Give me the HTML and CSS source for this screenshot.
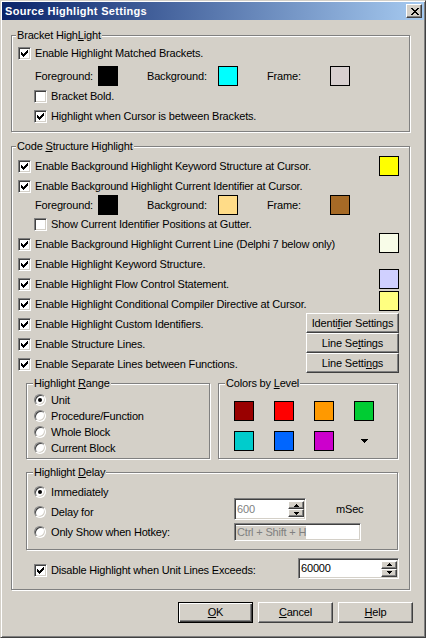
FILE: index.html
```html
<!DOCTYPE html>
<html>
<head>
<meta charset="utf-8">
<title>Source Highlight Settings</title>
<link rel="stylesheet" href="styles.css">
</head>
<body>
<div class="window">
  <div class="titlebar">
    <span class="title">Source Highlight Settings</span>
    <span class="close"><svg width="8" height="7" viewBox="0 0 8 7"><path d="M0 0h2v1h-2zM6 0h2v1h-2zM1 1h2v1h-2zM5 1h2v1h-2zM2 2h4v1h-4zM3 3h2v1h-2zM2 4h4v1h-4zM1 5h2v1h-2zM5 5h2v1h-2zM0 6h2v1h-2zM6 6h2v1h-2z"/></svg></span>
  </div>
  <div class="client">
    <fieldset class="group g1">
      <legend>Bracket High<u>L</u>ight</legend>
      <div class="row"><label class="chk"><span class="cb"><svg width="7" height="7" viewBox="0 0 7 7"><path d="M6 0h1v1h-1zM5 1h2v1h-2zM0 2h1v1h-1zM4 2h3v1h-3zM0 3h2v1h-2zM3 3h3v1h-3zM0 4h5v1h-5zM1 5h3v1h-3zM2 6h1v1h-1z"/></svg></span>Enable Highlight Matched Brackets.</label></div>
      <div class="fg fg1">
        <span class="lbl w63">Foreground:</span><span class="sw c-black"></span>
        <span class="lbl w71">Background:</span><span class="sw c-cyan"></span>
        <span class="lbl w63">Frame:</span><span class="sw c-pale"></span>
      </div>
      <div class="row sub"><label class="chk"><span class="cb"></span>Bracket Bold.</label></div>
      <div class="row sub"><label class="chk"><span class="cb"><svg width="7" height="7" viewBox="0 0 7 7"><path d="M6 0h1v1h-1zM5 1h2v1h-2zM0 2h1v1h-1zM4 2h3v1h-3zM0 3h2v1h-2zM3 3h3v1h-3zM0 4h5v1h-5zM1 5h3v1h-3zM2 6h1v1h-1z"/></svg></span>Highlight when Cursor is between Brackets.</label></div>
    </fieldset>

    <fieldset class="group g2">
      <legend>Code <u>S</u>tructure Highlight</legend>
      <div class="row split"><label class="chk"><span class="cb"><svg width="7" height="7" viewBox="0 0 7 7"><path d="M6 0h1v1h-1zM5 1h2v1h-2zM0 2h1v1h-1zM4 2h3v1h-3zM0 3h2v1h-2zM3 3h3v1h-3zM0 4h5v1h-5zM1 5h3v1h-3zM2 6h1v1h-1z"/></svg></span>Enable Background Highlight Keyword Structure at Cursor.</label><span class="sw c-yellow"></span></div>
      <div class="row"><label class="chk"><span class="cb"><svg width="7" height="7" viewBox="0 0 7 7"><path d="M6 0h1v1h-1zM5 1h2v1h-2zM0 2h1v1h-1zM4 2h3v1h-3zM0 3h2v1h-2zM3 3h3v1h-3zM0 4h5v1h-5zM1 5h3v1h-3zM2 6h1v1h-1z"/></svg></span>Enable Background Highlight Current Identifier at Cursor.</label></div>
      <div class="fg fg2">
        <span class="lbl w63">Foreground:</span><span class="sw c-black"></span>
        <span class="lbl w71">Background:</span><span class="sw c-sand"></span>
        <span class="lbl w63">Frame:</span><span class="sw c-brown"></span>
      </div>
      <div class="row sub short"><label class="chk"><span class="cb"></span>Show Current Identifier Positions at Gutter.</label></div>
      <div class="row split gap1"><label class="chk"><span class="cb"><svg width="7" height="7" viewBox="0 0 7 7"><path d="M6 0h1v1h-1zM5 1h2v1h-2zM0 2h1v1h-1zM4 2h3v1h-3zM0 3h2v1h-2zM3 3h3v1h-3zM0 4h5v1h-5zM1 5h3v1h-3zM2 6h1v1h-1z"/></svg></span>Enable Background Highlight Current Line (Delphi 7 below only)</label><span class="sw c-ivory up1"></span></div>
      <div class="row"><label class="chk"><span class="cb"><svg width="7" height="7" viewBox="0 0 7 7"><path d="M6 0h1v1h-1zM5 1h2v1h-2zM0 2h1v1h-1zM4 2h3v1h-3zM0 3h2v1h-2zM3 3h3v1h-3zM0 4h5v1h-5zM1 5h3v1h-3zM2 6h1v1h-1z"/></svg></span>Enable Highlight Keyword Structure.</label></div>
      <div class="row split"><label class="chk"><span class="cb"><svg width="7" height="7" viewBox="0 0 7 7"><path d="M6 0h1v1h-1zM5 1h2v1h-2zM0 2h1v1h-1zM4 2h3v1h-3zM0 3h2v1h-2zM3 3h3v1h-3zM0 4h5v1h-5zM1 5h3v1h-3zM2 6h1v1h-1z"/></svg></span>Enable Highlight Flow Control Statement.</label><span class="sw c-lavender up5"></span></div>
      <div class="row split"><label class="chk"><span class="cb"><svg width="7" height="7" viewBox="0 0 7 7"><path d="M6 0h1v1h-1zM5 1h2v1h-2zM0 2h1v1h-1zM4 2h3v1h-3zM0 3h2v1h-2zM3 3h3v1h-3zM0 4h5v1h-5zM1 5h3v1h-3zM2 6h1v1h-1z"/></svg></span>Enable Highlight Conditional Compiler Directive at Cursor.</label><span class="sw c-lemon up3"></span></div>
      <div class="row split"><label class="chk"><span class="cb"><svg width="7" height="7" viewBox="0 0 7 7"><path d="M6 0h1v1h-1zM5 1h2v1h-2zM0 2h1v1h-1zM4 2h3v1h-3zM0 3h2v1h-2zM3 3h3v1h-3zM0 4h5v1h-5zM1 5h3v1h-3zM2 6h1v1h-1z"/></svg></span>Enable Highlight Custom Identifiers.</label><span class="btn side">Identi<u>f</u>ier Settings</span></div>
      <div class="row split"><label class="chk"><span class="cb"><svg width="7" height="7" viewBox="0 0 7 7"><path d="M6 0h1v1h-1zM5 1h2v1h-2zM0 2h1v1h-1zM4 2h3v1h-3zM0 3h2v1h-2zM3 3h3v1h-3zM0 4h5v1h-5zM1 5h3v1h-3zM2 6h1v1h-1z"/></svg></span>Enable Structure Lines.</label><span class="btn side">Line Se<u>t</u>tings</span></div>
      <div class="row split"><label class="chk"><span class="cb"><svg width="7" height="7" viewBox="0 0 7 7"><path d="M6 0h1v1h-1zM5 1h2v1h-2zM0 2h1v1h-1zM4 2h3v1h-3zM0 3h2v1h-2zM3 3h3v1h-3zM0 4h5v1h-5zM1 5h3v1h-3zM2 6h1v1h-1z"/></svg></span>Enable Separate Lines between Functions.</label><span class="btn side">Line Setti<u>n</u>gs</span></div>

      <div class="subrow">
        <fieldset class="group inner range">
          <legend>Highlight <u>R</u>ange</legend>
          <label class="rad r16"><span class="rb on"></span>Unit</label>
          <label class="rad r16"><span class="rb"></span>Procedure/Function</label>
          <label class="rad r16"><span class="rb"></span>Whole Block</label>
          <label class="rad r16"><span class="rb"></span>Current Block</label>
        </fieldset>
        <fieldset class="group inner levels">
          <legend>Colors by <u>L</u>evel</legend>
          <div class="palette">
            <span class="sw c-l1"></span><span class="sw c-l2"></span><span class="sw c-l3"></span><span class="sw c-l4"></span>
            <span class="sw c-l5"></span><span class="sw c-l6"></span><span class="sw c-l7"></span>
            <span class="more"><svg width="7" height="4" viewBox="0 0 7 4"><path d="M0 0h7v1h-1v1h-1v1h-1v1h-1v-1h-1v-1h-1v-1h-1z"/></svg></span>
          </div>
        </fieldset>
      </div>

      <fieldset class="group inner delay">
        <legend>Highlight <u>D</u>elay</legend>
        <div class="drow"><label class="rad dl"><span class="rb on"></span>Immediately</label></div>
        <div class="drow">
          <label class="rad dl"><span class="rb"></span>Delay for</label>
          <span class="edit e600"><span class="val dis">600</span><span class="spin"><i><svg width="5" height="3" viewBox="0 0 5 3"><path d="M2 0h1v1h1v1h1v1h-5v-1h1v-1h1z"/></svg></i><i><svg width="5" height="3" viewBox="0 0 5 3"><path d="M0 0h5v1h-1v1h-1v1h-1v-1h-1v-1h-1z"/></svg></i></span></span>
          <span class="msec">mSec</span>
        </div>
        <div class="drow">
          <label class="rad dl"><span class="rb"></span>Only Show when Hotkey:</label>
          <span class="edit hotkey"><span class="val dis sel">Ctrl + Shift + H</span></span>
        </div>
      </fieldset>

      <div class="row sub limit">
        <label class="chk"><span class="cb"><svg width="7" height="7" viewBox="0 0 7 7"><path d="M6 0h1v1h-1zM5 1h2v1h-2zM0 2h1v1h-1zM4 2h3v1h-3zM0 3h2v1h-2zM3 3h3v1h-3zM0 4h5v1h-5zM1 5h3v1h-3zM2 6h1v1h-1z"/></svg></span>Disable Highlight when Unit Lines Exceeds:</label>
        <span class="edit e60000"><span class="val">60000</span><span class="spin"><i><svg width="5" height="3" viewBox="0 0 5 3"><path d="M2 0h1v1h1v1h1v1h-5v-1h1v-1h1z"/></svg></i><i><svg width="5" height="3" viewBox="0 0 5 3"><path d="M0 0h5v1h-1v1h-1v1h-1v-1h-1v-1h-1z"/></svg></i></span></span>
      </div>
    </fieldset>

    <div class="buttons">
      <span class="btn dlg default"><u>O</u>K</span>
      <span class="btn dlg"><u>C</u>ancel</span>
      <span class="btn dlg"><u>H</u>elp</span>
    </div>
  </div>
</div>
</body>
</html>
```

FILE: styles.css
```css
* { box-sizing: border-box; }
html, body { margin: 0; padding: 0; }
body {
  width: 426px;
  height: 638px;
  overflow: hidden;
  background: #D4D0C8;
  color: #000;
  font-family: "Liberation Sans", Arial, sans-serif;
  font-size: 11px;
  line-height: 13px;
  letter-spacing: -0.18px;
}
u { text-decoration: underline; text-underline-offset: 1px; }

.window {
  width: 426px;
  height: 638px;
  background: #D4D0C8;
  border: 1px solid;
  border-color: #D4D0C8 #404040 #404040 #D4D0C8;
  box-shadow: inset 1px 1px 0 #fff, inset -1px -1px 0 #808080;
  padding: 1px;
  display: flex;
  flex-direction: column;
}

.titlebar {
  height: 18px;
  flex: none;
  display: flex;
  align-items: center;
  padding: 0 2px 0 3px;
  background: linear-gradient(to right, #0A246A, #A6CAF0);
}
.title { flex: 1; color: #fff; font-weight: bold; letter-spacing: 0.3px; }
.close {
  width: 16px;
  height: 14px;
  background: #D4D0C8;
  border: 1px solid;
  border-color: #fff #404040 #404040 #fff;
  box-shadow: inset -1px -1px 0 #808080;
  display: flex;
  align-items: center;
  justify-content: center;
}
.close svg { display: block; margin-left: 1px; }

.client {
  flex: 1;
  display: flex;
  flex-direction: column;
  padding-left: 9px;
}

/* etched group boxes */
.group {
  margin: 0;
  padding: 0;
  min-width: 0;
  border: 1px solid #808080;
  box-shadow: 1px 1px 0 #fff, inset 1px 1px 0 #fff;
}
.group legend {
  padding: 0 1px;
  height: 13px;
  line-height: 13px;
  background: #D4D0C8;
}
.g1 legend, .g2 > legend { margin-left: -2px; }
.range legend, .delay legend { margin-left: -1px; }
.levels legend { margin-left: -9px; }

.g1 { width: 399px; margin-top: 9px; padding: 1px 10px 5px 6px; }
.g2 { width: 399px; margin-top: 8px; padding: 3px 10px 9px 6px; }

.row { display: flex; align-items: flex-start; height: 20px; }
.row.split { justify-content: space-between; }
.row.sub { padding-left: 16px; }
.row.short { height: 18px; }
.row.gap1 { margin-top: 1px; }

.chk { display: flex; align-items: center; height: 20px; white-space: nowrap; }
.row.short .chk { height: 18px; }
.cb {
  flex: none;
  width: 13px;
  height: 13px;
  margin-right: 4px;
  background: #fff;
  border: 1px solid;
  border-color: #808080 #fff #fff #808080;
  box-shadow: inset 1px 1px 0 #404040, inset -1px -1px 0 #D4D0C8;
  display: flex;
  align-items: center;
  justify-content: center;
}
.cb svg { display: block; }

/* colour swatches */
.sw { flex: none; width: 20px; height: 20px; border: 1px solid #000; display: block; }
.up1 { margin-top: -1px; }
.up3 { margin-top: -3px; }
.up5 { margin-top: -5px; }
.c-black { background: #000; }
.c-cyan { background: #00FFFF; }
.c-pale { background: #D8D0D0; }
.c-yellow { background: #FFFF00; }
.c-sand { background: #FFDC88; }
.c-brown { background: #A66A26; }
.c-ivory { background: #F8FCE8; }
.c-lavender { background: #D0D0FF; }
.c-lemon { background: #FFFF80; }
.c-l1 { background: #990000; }
.c-l2 { background: #FF0000; }
.c-l3 { background: #FF9900; }
.c-l4 { background: #00CC33; }
.c-l5 { background: #00CCCC; }
.c-l6 { background: #0066FF; }
.c-l7 { background: #CC00CC; }

.fg { display: flex; align-items: center; height: 20px; padding-left: 17px; }
.fg .sw { margin-right: 29px; }
.fg .sw:last-child { margin-right: 0; }
.fg1 { margin-top: 3px; }
.fg2 { margin-top: -1px; }
.lbl { flex: none; }
.w63 { width: 63px; }
.w71 { width: 71px; }

/* push buttons */
.btn {
  flex: none;
  display: flex;
  align-items: center;
  justify-content: center;
  background: #D4D0C8;
  border: 1px solid;
  border-color: #fff #404040 #404040 #fff;
  box-shadow: inset -1px -1px 0 #808080;
  white-space: nowrap;
}
.btn.side { width: 93px; height: 20px; margin-top: -1px; }
.btn.dlg { width: 75px; height: 21px; }
.btn.default {
  border-color: #000;
  box-shadow: inset 1px 1px 0 #fff, inset -1px -1px 0 #404040, inset -2px -2px 0 #808080;
}

/* sub groups */
.subrow { display: flex; gap: 8px; margin-top: 3px; padding-left: 8px; }
.range { width: 184px; padding: 2px 0 2px 7px; }
.levels { width: 180px; padding: 11px 0 7px 15px; }
.palette {
  display: grid;
  grid-template-columns: repeat(4, 20px);
  grid-auto-rows: 20px;
  column-gap: 20px;
  row-gap: 10px;
}
.more { display: flex; align-items: center; justify-content: center; }
.more svg { display: block; }

.rad { display: flex; align-items: center; white-space: nowrap; }
.r16 { height: 16px; }
.rb {
  flex: none;
  position: relative;
  width: 12px;
  height: 12px;
  margin-right: 5px;
  border-radius: 50%;
  background: #fff;
  border: 1px solid;
  border-color: #808080 #fff #fff #808080;
  box-shadow: inset 1px 1px 0 #404040, inset -1px -1px 0 #D4D0C8;
}
.rb.on::after {
  content: "";
  position: absolute;
  left: 3px;
  top: 3px;
  width: 4px;
  height: 4px;
  border-radius: 50%;
  background: #000;
}

.delay { width: 372px; margin-top: 7px; margin-left: 8px; padding: 3px 0 7px 7px; }
.drow { display: flex; align-items: flex-start; height: 20px; }
.dl { width: 200px; height: 20px; }
.msec { margin-left: 30px; margin-top: -3px; line-height: 20px; }

/* sunken edits */
.edit {
  flex: none;
  display: flex;
  align-items: center;
  background: #fff;
  border: 1px solid;
  border-color: #808080 #fff #fff #808080;
  box-shadow: inset 1px 1px 0 #404040, inset -1px -1px 0 #D4D0C8;
  padding: 0 0 0 1px;
}
.val { flex: 1; padding-left: 1px; white-space: nowrap; }
.dis { color: #808080; }
.sel { flex: none; background: #D4D0C8; }
.e600 { width: 72px; height: 22px; margin-top: -4px; }
.hotkey { width: 127px; height: 18px; margin-top: 1px; }
.e60000 { width: 101px; height: 21px; margin-top: -2px; margin-left: auto; }
.spin { flex: none; display: flex; flex-direction: column; width: 16px; height: 16px; margin-right: 1px; }
.spin i {
  flex: 1;
  display: flex;
  align-items: center;
  justify-content: center;
  background: #D4D0C8;
  border: 1px solid;
  border-color: #fff #404040 #404040 #fff;
  box-shadow: inset -1px -1px 0 #808080;
}
.spin svg { display: block; }

.limit { margin-top: 10px; }

.buttons {
  display: flex;
  justify-content: flex-end;
  gap: 5px;
  margin-top: 12px;
  padding-right: 11px;
}
```
